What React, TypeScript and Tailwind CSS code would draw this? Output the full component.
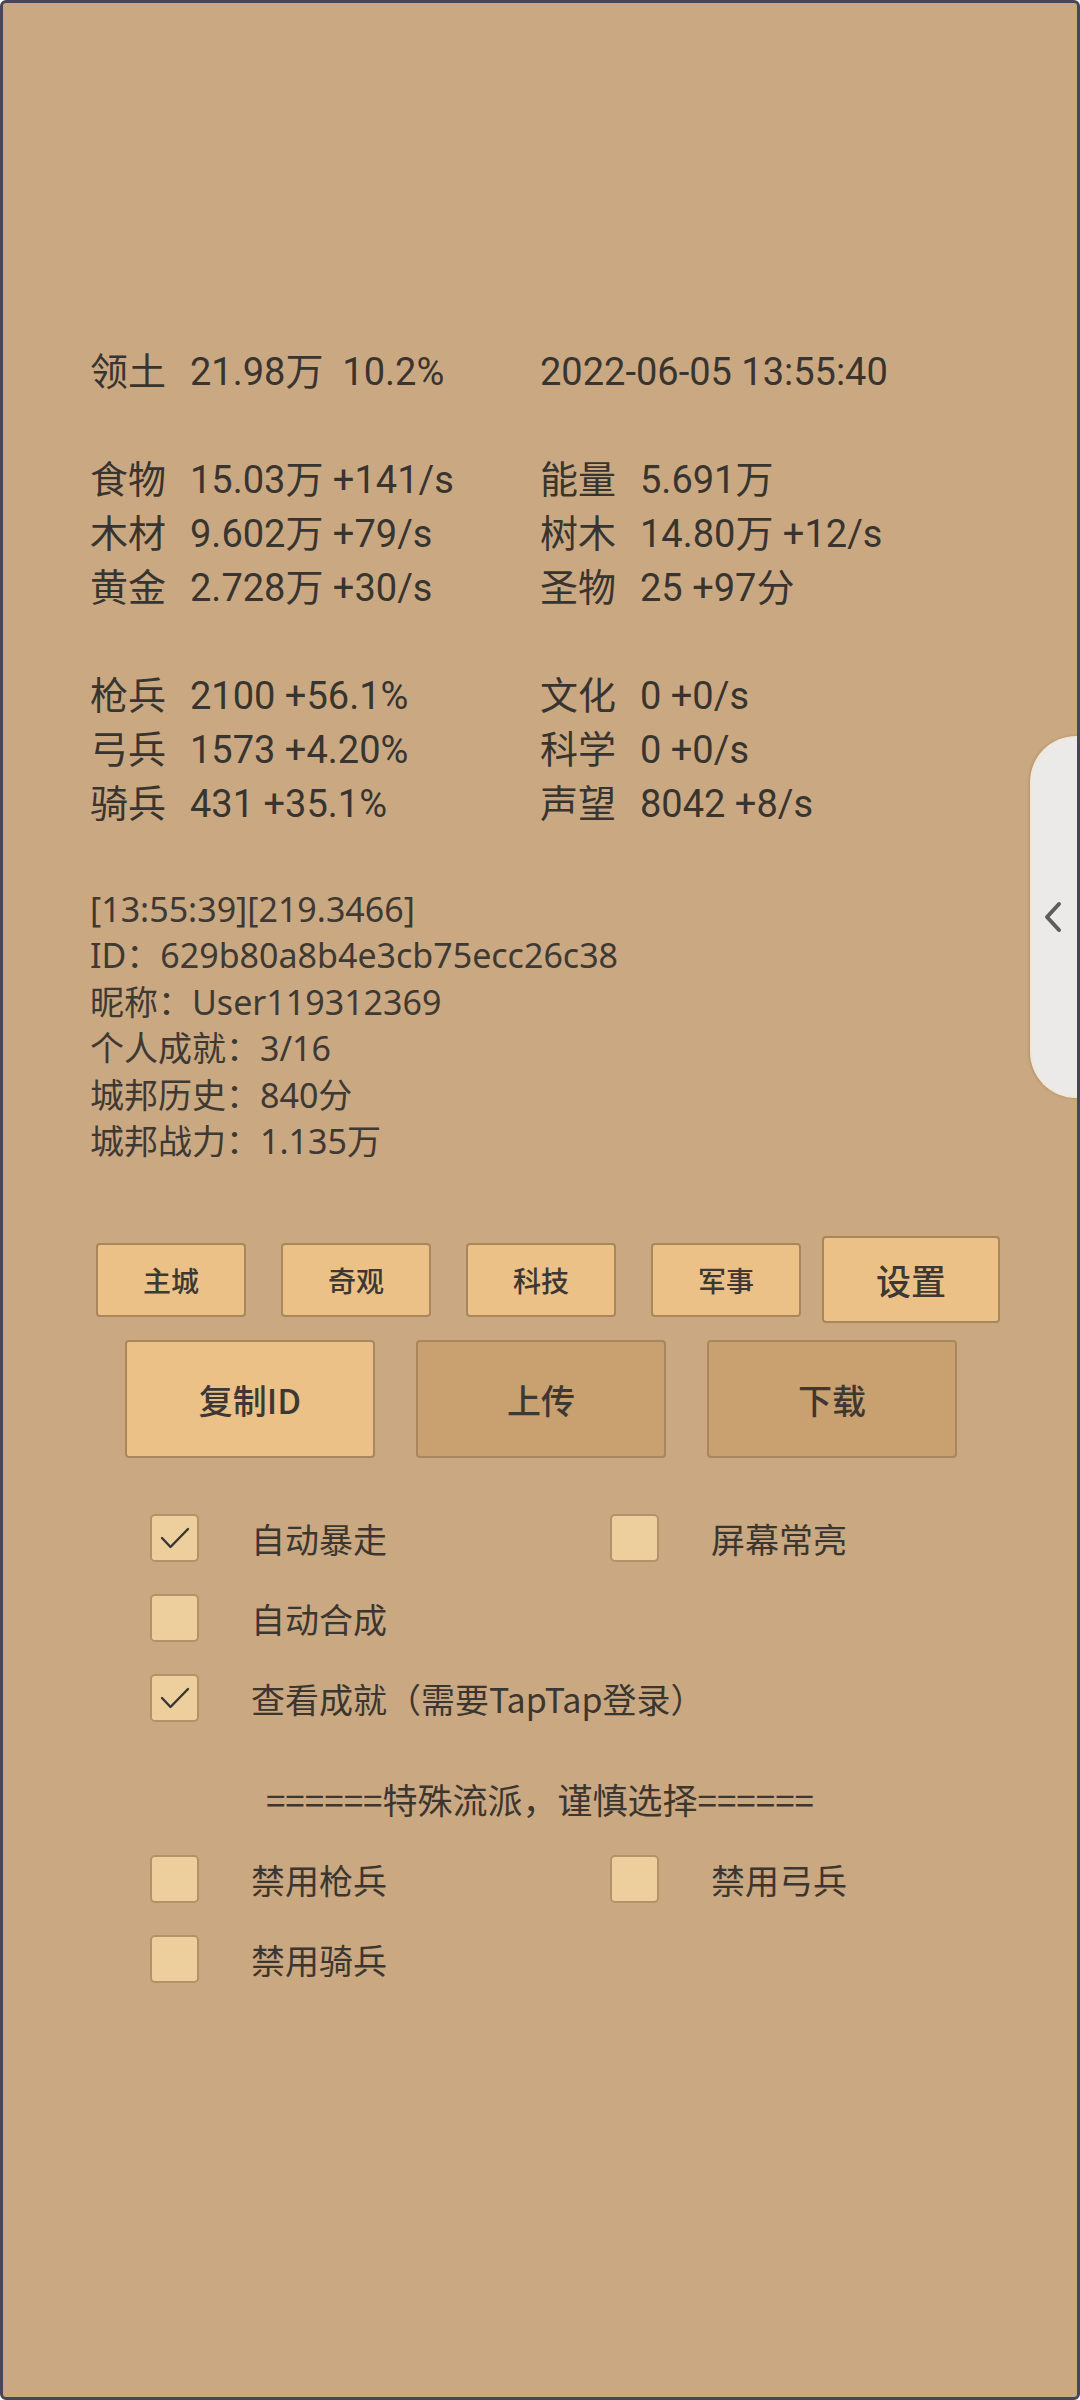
import React from "react";

const statFont = { fontFamily: "Roboto, 'Noto Sans CJK SC', sans-serif" };
const logFont = { fontFamily: "'Noto Sans', 'Noto Sans CJK SC', sans-serif" };
const cjkFont = { fontFamily: "'Noto Sans CJK SC', 'Noto Sans', sans-serif" };

function Stat({ label, value }: { label?: string; value: string }) {
  return (
    <div className="flex h-[54px] items-center">
      {label ? <span className="w-[100px] shrink-0">{label}</span> : null}
      <span className="whitespace-pre">{value}</span>
    </div>
  );
}

function StatRow({ l, r }: { l?: [string, string]; r?: [string, string] }) {
  return (
    <div className="flex h-[54px]">
      <div className="w-[450px]">{l ? <Stat label={l[0]} value={l[1]} /> : null}</div>
      <div>{r ? <Stat label={r[0]} value={r[1]} /> : null}</div>
    </div>
  );
}

function Check({ checked, label }: { checked?: boolean; label: string }) {
  return (
    <div className="flex h-[80px] items-center">
      <div className="flex h-[48px] w-[49px] shrink-0 items-center justify-center rounded-[5px] border-2 border-[#b39269] bg-[#edcf9e]">
        {checked ? (
          <svg width="32" height="26" viewBox="0 0 32 26" fill="none">
            <path d="M3 13 L11.5 22 L29 4" stroke="#3a3530" strokeWidth="2.4" strokeLinecap="round" strokeLinejoin="round" />
          </svg>
        ) : null}
      </div>
      <span className="ml-[52px] text-[34px] text-[#3c3630]" style={cjkFont}>
        {label}
      </span>
    </div>
  );
}

function Btn({
  label,
  w,
  h,
  dark,
  size,
}: {
  label: string;
  w: string;
  h: string;
  dark?: boolean;
  size: string;
}) {
  return (
    <div
      className={`flex items-center justify-center rounded-[4px] border-2 border-[#a9875d] ${w} ${h} ${size} ${
        dark ? "bg-[#c9a06f]" : "bg-[#ebc187]"
      } font-medium text-[#3d3833]`}
      style={cjkFont}
    >
      {label}
    </div>
  );
}

export default function App() {
  return (
    <div className="relative box-border h-[2400px] w-[1080px] overflow-hidden rounded-[6px] border-[3px] border-[#454757] bg-[#caa982]">
      <div className="pl-[87px] pt-[342px] text-[38px] text-[#38342f]" style={statFont}>
        <StatRow l={["领土", "21.98万  10.2%"]} r={["", "2022-06-05 13:55:40"]} />
        <div className="h-[54px]" />
        <StatRow l={["食物", "15.03万 +141/s"]} r={["能量", "5.691万"]} />
        <StatRow l={["木材", "9.602万 +79/s"]} r={["树木", "14.80万 +12/s"]} />
        <StatRow l={["黄金", "2.728万 +30/s"]} r={["圣物", "25 +97分"]} />
        <div className="h-[54px]" />
        <StatRow l={["枪兵", "2100 +56.1%"]} r={["文化", "0 +0/s"]} />
        <StatRow l={["弓兵", "1573 +4.20%"]} r={["科学", "0 +0/s"]} />
        <StatRow l={["骑兵", "431 +35.1%"]} r={["声望", "8042 +8/s"]} />
      </div>

      <div className="mt-[55px] pl-[87px] text-[34px] leading-[46.4px] text-[#3e3933]" style={logFont}>
        <div>[13:55:39][219.3466]</div>
        <div>ID：629b80a8b4e3cb75ecc26c38</div>
        <div>昵称：User119312369</div>
        <div>个人成就：3/16</div>
        <div>城邦历史：840分</div>
        <div>城邦战力：1.135万</div>
      </div>

      <div className="mt-[72px] flex items-center pl-[93px]">
        <div className="flex gap-[35px]">
          <Btn label="主城" w="w-[150px]" h="h-[74px]" size="text-[28px]" />
          <Btn label="奇观" w="w-[150px]" h="h-[74px]" size="text-[28px]" />
          <Btn label="科技" w="w-[150px]" h="h-[74px]" size="text-[28px]" />
          <Btn label="军事" w="w-[150px]" h="h-[74px]" size="text-[28px]" />
        </div>
        <div className="ml-[21px]">
          <Btn label="设置" w="w-[178px]" h="h-[87px]" size="text-[35px]" />
        </div>
      </div>

      <div className="mt-[17px] flex gap-[41px] pl-[122px]">
        <Btn label="复制ID" w="w-[250px]" h="h-[118px]" size="text-[34px]" />
        <Btn label="上传" w="w-[250px]" h="h-[118px]" size="text-[34px]" dark />
        <Btn label="下载" w="w-[250px]" h="h-[118px]" size="text-[34px]" dark />
      </div>

      <div className="mt-[40px] pl-[147px]">
        <div className="flex">
          <div className="w-[460px]">
            <Check checked label="自动暴走" />
          </div>
          <Check label="屏幕常亮" />
        </div>
        <Check label="自动合成" />
        <Check checked label="查看成就（需要TapTap登录）" />
      </div>

      <div
        className="mt-[41px] flex h-[40px] items-center justify-center text-[35px] text-[#3c3630]"
        style={cjkFont}
      >
        ======特殊流派，谨慎选择======
      </div>

      <div className="mt-[20px] pl-[147px]">
        <div className="flex">
          <div className="w-[460px]">
            <Check label="禁用枪兵" />
          </div>
          <Check label="禁用弓兵" />
        </div>
        <Check label="禁用骑兵" />
      </div>

      <div className="absolute right-[-3px] top-[733px] flex h-[362px] w-[50px] items-center rounded-l-[46px] border-2 border-r-0 border-[#f3e6d4] bg-[#ebeae9] shadow-[-1px_0_3px_rgba(0,0,0,0.15)]">
        <svg className="ml-[10px]" width="22" height="38" viewBox="0 0 22 38" fill="none">
          <path d="M17 6 L5 19 L17 32" stroke="#5d5d5d" strokeWidth="4" strokeLinecap="round" strokeLinejoin="round" />
        </svg>
      </div>
    </div>
  );
}
